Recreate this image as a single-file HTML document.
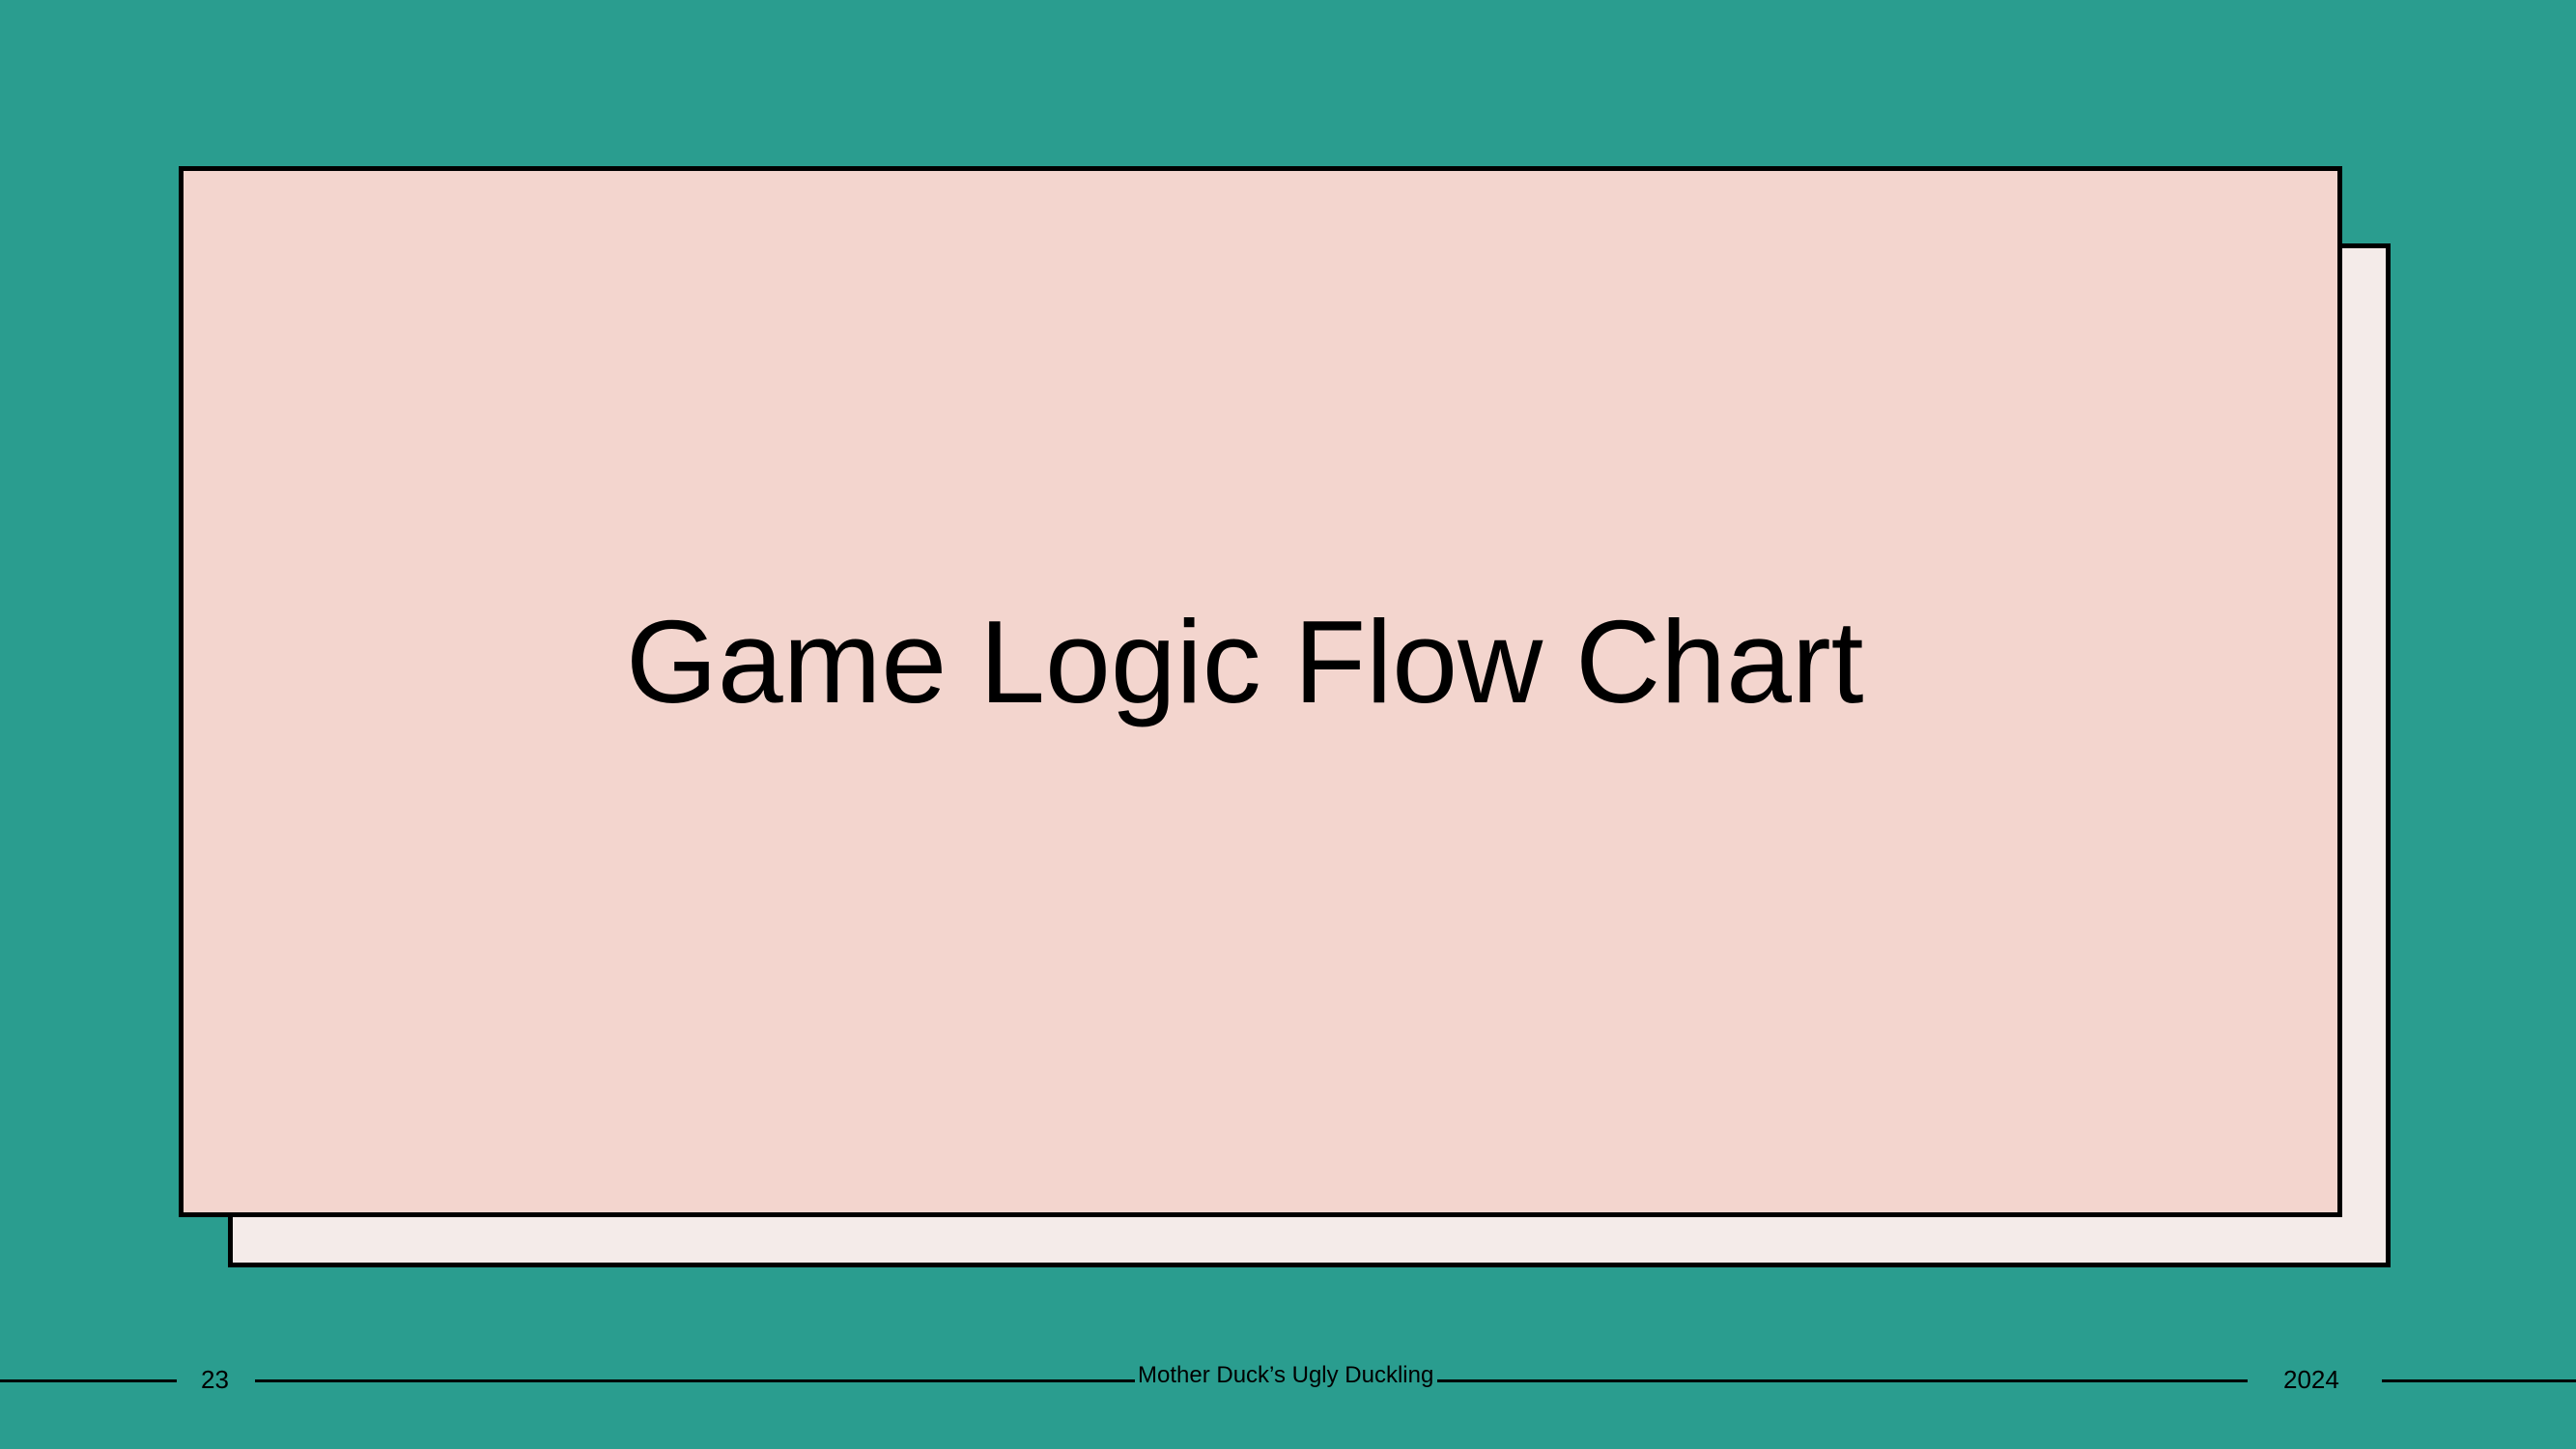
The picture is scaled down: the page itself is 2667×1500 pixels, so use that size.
<!DOCTYPE html>
<html><head><meta charset="utf-8"><style>
html,body{margin:0;padding:0}
body{width:2667px;height:1500px;background:#2a9d8f;position:relative;overflow:hidden;font-family:"Liberation Sans",sans-serif}
.shadow{position:absolute;left:236px;top:252px;width:2239px;height:1060px;box-sizing:border-box;background:#f4ebe9;border:5px solid #000}
.main{position:absolute;left:185px;top:172px;width:2240px;height:1088px;box-sizing:border-box;background:#f3d5ce;border:5px solid #000}
.title{position:absolute;left:648px;top:624px;white-space:nowrap;font-size:122px;color:#000;line-height:1}
.line{position:absolute;height:3px;background:#000;top:1428px}
.ft{position:absolute;font-size:26px;color:#000;top:1413px}
</style></head><body>
<div class="shadow"></div>
<div class="main"></div>
<div class="title">Game Logic Flow Chart</div>
<div class="line" style="left:0;width:183px"></div>
<div class="ft" style="left:208px">23</div>
<div class="line" style="left:264px;width:911px"></div>
<div class="ft" style="left:1178px;top:1410px;font-size:24px">Mother Duck’s Ugly Duckling</div>
<div class="line" style="left:1488px;width:839px"></div>
<div class="ft" style="left:2364px">2024</div>
<div class="line" style="left:2466px;width:201px"></div>
</body></html>
